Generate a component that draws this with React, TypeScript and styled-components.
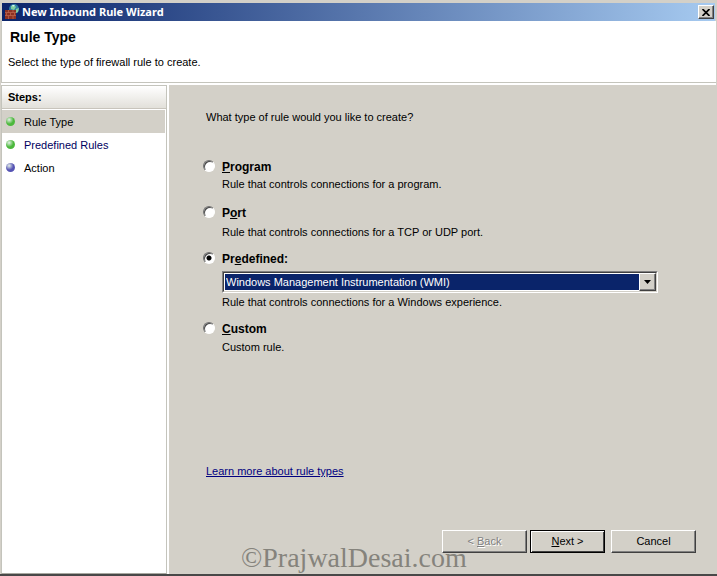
import React, { useState } from "react";
import styled, { createGlobalStyle, css } from "styled-components";

const face = "#d3d0c8";
const sans = '"Liberation Sans", Arial, sans-serif';

const GlobalStyle = createGlobalStyle`
  *, *::before, *::after { box-sizing: border-box; }
  body { margin: 0; background: ${face}; }
  button, input, select { font: inherit; margin: 0; }
`;

const Window = styled.div`
  position: relative;
  display: flex;
  flex-direction: column;
  min-height: 100vh;
  padding: 3px 1px 0;
  background: ${face};
  border-bottom: 2px solid #484848;
  color: #000;
  font: 11px/14px ${sans};
`;

const TitleBar = styled.header`
  display: flex;
  align-items: center;
  height: 18px;
  margin: 0 1px;
  padding: 0 1px 0 2px;
  gap: 2px;
  background: linear-gradient(90deg, #0a246a, #a6caf0);
  color: #fff;
`;

const WindowTitle = styled.span`
  flex: 1;
  font: bold 11px/16px "Noto Sans", Tahoma, sans-serif;
`;

const CloseButton = styled.button`
  display: grid;
  place-items: center;
  width: 16px;
  height: 14px;
  padding: 0;
  background: ${face};
  border: 1px solid;
  border-color: #fff #404040 #404040 #fff;
  box-shadow: inset -1px -1px #808080;
`;

const Banner = styled.section`
  height: 62px;
  padding: 7px 8px 0 6px;
  background: #fff;
  border-left: 1px solid #c8c8c0;
  border-bottom: 1px solid #c4c4bc;
`;

const Heading = styled.h1`
  margin: 0 0 9px;
  padding-left: 2px;
  font: bold 14px/18px ${sans};
`;

const Description = styled.p`
  margin: 0;
`;

const Body = styled.div`
  flex: 1;
  display: flex;
  gap: 2px;
  padding-top: 2px;
  background: #fff;
`;

const Sidebar = styled.nav`
  width: 166px;
  flex: none;
  background: #fff;
  border: 1px solid #c4c4bc;
  border-bottom-color: #a8a8a0;
`;

const SidebarTitle = styled.h2`
  margin: 0 0 1px;
  padding: 0 6px;
  height: 23px;
  border-bottom: 1px solid #c8c4bc;
  background: linear-gradient(#fff, #e2e0da);
  font: bold 11px/23px ${sans};
`;

const StepList = styled.ol`
  margin: 0;
  padding: 0 1px 0 0;
  list-style: none;
`;

const StepItem = styled.li<{ $current?: boolean }>`
  display: flex;
  align-items: center;
  gap: 9px;
  height: 23px;
  padding-left: 4px;
  background: ${(p) => (p.$current ? face : "transparent")};
`;

const StepDot = styled.span<{ $color: string }>`
  width: 9px;
  height: 9px;
  border-radius: 50%;
  background: radial-gradient(circle at 35% 30%, #e4f0e8 0, ${(p) => p.$color} 50%);
`;

const StepLink = styled.a`
  color: #000060;
  text-decoration: none;
`;

const Content = styled.main`
  flex: 1;
  display: flex;
  flex-direction: column;
  padding: 25px 20px 21px 34px;
  background: ${face};
`;

const Question = styled.legend`
  padding: 0 0 0 3px;
  margin-bottom: 35px;
`;

const Choices = styled.fieldset`
  margin: 0;
  padding: 0;
  border: 0;
`;

const Choice = styled.div<{ $gap: number }>`
  display: grid;
  grid-template-columns: 13px minmax(0, 1fr);
  column-gap: 6px;
  margin-bottom: ${(p) => p.$gap}px;
`;

const Radio = styled.input`
  appearance: none;
  width: 12px;
  height: 12px;
  align-self: start;
  margin-top: 1px;
  border: 1px solid;
  border-color: #707070 #fff #fff #707070;
  border-radius: 50%;
  background: #fff;
  box-shadow: inset 1px 1px #484848;
  &:checked {
    background: radial-gradient(circle, #000 0 2px, #fff 3px);
  }
`;

const ChoiceLabel = styled.label`
  font: bold 12px/16px ${sans};
`;

const Hint = styled.p<{ $gap?: number }>`
  grid-column: 2;
  margin: ${(p) => p.$gap ?? 2}px 0 0;
`;

const SelectBox = styled.div`
  grid-column: 2;
  position: relative;
  width: calc(100% - 38px);
  height: 22px;
  margin-top: 4px;
  border: 1px solid;
  border-color: #808080 #fff #fff #808080;
`;

const Select = styled.select`
  appearance: none;
  display: block;
  width: 100%;
  height: 20px;
  padding: 0 20px 0 2px;
  border: 1px solid;
  border-color: #404040 ${face} ${face} #404040;
  border-radius: 0;
  outline: 0;
  background: #0a246a;
  box-shadow: inset 0 0 0 1px #fff;
  color: #fff;
`;

const Arrow = styled.span`
  position: absolute;
  inset: 1px 1px 1px auto;
  width: 17px;
  display: grid;
  place-items: center;
  pointer-events: none;
  background: ${face};
  border: 1px solid;
  border-color: #fff #404040 #404040 #fff;
  box-shadow: inset -1px -1px #808080;
`;

const HelpLink = styled.a`
  align-self: flex-start;
  margin: 110px 0 0 3px;
  color: #000080;
`;

const Actions = styled.footer`
  display: flex;
  justify-content: flex-end;
  gap: 3px;
  margin-top: auto;
`;

const ActionButton = styled.button<{ $primary?: boolean }>`
  width: ${(p) => (p.$primary ? 75 : 85)}px;
  height: 23px;
  padding: 0 0 2px;
  background: ${face};
  color: #000;
  border: 1px solid;
  border-color: #fff #404040 #404040 #fff;
  box-shadow: inset -1px -1px #808080;
  ${(p) =>
    p.$primary &&
    css`
      margin-right: 3px;
      border-color: #000;
      box-shadow: inset 1px 1px #fff, inset -1px -1px #404040;
    `}
  &:disabled {
    color: #808080;
    text-shadow: 1px 1px #fff;
  }
`;

const Watermark = styled.div`
  position: absolute;
  left: 241px;
  bottom: 3px;
  pointer-events: none;
  color: #85837c;
  font: 28px/26px "Liberation Serif", serif;
`;

const FirewallIcon = () => (
  <svg width="16" height="16" viewBox="0 0 16 16" aria-hidden="true">
    <circle cx="10" cy="5" r="5" fill="#2f7fa5" />
    <path d="M7 2l3-1 2 2-2 3-3-1zM12 5l3-1-1 4-2 1z" fill="#7fce9e" />
    <path d="M8 1l3 0-2 2z" fill="#d8f4f0" />
    <path d="M1 6h11v9H1z" fill="#8c3222" />
    <path
      d="M1 8.5h11M1 11.5h11M4.5 6v2.5M9 6v2.5M2.500 9v2.500M6.500 9v2.500M10.500 9v2.500M4.500 12v3M9 12v3"
      stroke="#c06a52"
      strokeWidth="0.7"
    />
  </svg>
);

const rules = [
  { id: "program", pre: "", key: "P", post: "rogram", hint: "Rule that controls connections for a program.", gap: 14, hintGap: 2 },
  { id: "port", pre: "P", key: "o", post: "rt", hint: "Rule that controls connections for a TCP or UDP port.", gap: 12, hintGap: 4 },
  { id: "predefined", pre: "Pr", key: "e", post: "defined:", hint: "Rule that controls connections for a Windows experience.", gap: 12, hintGap: 2 },
  { id: "custom", pre: "", key: "C", post: "ustom", hint: "Custom rule.", gap: 0, hintGap: 3 },
];

export default function App() {
  const [selected, setSelected] = useState("predefined");
  return (
    <>
      <GlobalStyle />
      <Window>
        <TitleBar>
          <FirewallIcon />
          <WindowTitle>New Inbound Rule Wizard</WindowTitle>
          <CloseButton aria-label="Close">
            <svg width="8" height="7" viewBox="0 0 8 7" aria-hidden="true">
              <path d="M0.500 0l7 7M7.500 0l-7 7" stroke="#000" strokeWidth="1.700" />
            </svg>
          </CloseButton>
        </TitleBar>
        <Banner>
          <Heading>Rule Type</Heading>
          <Description>Select the type of firewall rule to create.</Description>
        </Banner>
        <Body>
          <Sidebar aria-label="Steps">
            <SidebarTitle>Steps:</SidebarTitle>
            <StepList>
              <StepItem $current aria-current="step">
                <StepDot $color="#4cb83c" />
                Rule Type
              </StepItem>
              <StepItem>
                <StepDot $color="#4cb83c" />
                <StepLink href="#predefined-rules">Predefined Rules</StepLink>
              </StepItem>
              <StepItem>
                <StepDot $color="#5654b4" />
                Action
              </StepItem>
            </StepList>
          </Sidebar>
          <Content>
            <Choices>
              <Question>What type of rule would you like to create?</Question>
              {rules.map((r) => (
                <Choice key={r.id} $gap={r.gap}>
                  <Radio
                    type="radio"
                    name="rule"
                    id={r.id}
                    checked={selected === r.id}
                    onChange={() => setSelected(r.id)}
                  />
                  <ChoiceLabel htmlFor={r.id}>
                    {r.pre}
                    <u>{r.key}</u>
                    {r.post}
                  </ChoiceLabel>
                  {r.id === "predefined" && (
                    <SelectBox>
                      <Select aria-label="Predefined rule">
                        <option>Windows Management Instrumentation (WMI)</option>
                      </Select>
                      <Arrow>
                        <svg width="7" height="4" viewBox="0 0 7 4" aria-hidden="true">
                          <path d="M0 0h7L3.500 4z" />
                        </svg>
                      </Arrow>
                    </SelectBox>
                  )}
                  <Hint $gap={r.hintGap}>{r.hint}</Hint>
                </Choice>
              ))}
            </Choices>
            <HelpLink href="#rule-types">Learn more about rule types</HelpLink>
            <Actions>
              <ActionButton disabled>
                &lt; <u>B</u>ack
              </ActionButton>
              <ActionButton $primary>
                <u>N</u>ext &gt;
              </ActionButton>
              <ActionButton>Cancel</ActionButton>
            </Actions>
          </Content>
        </Body>
        <Watermark>©PrajwalDesai.com</Watermark>
      </Window>
    </>
  );
}
